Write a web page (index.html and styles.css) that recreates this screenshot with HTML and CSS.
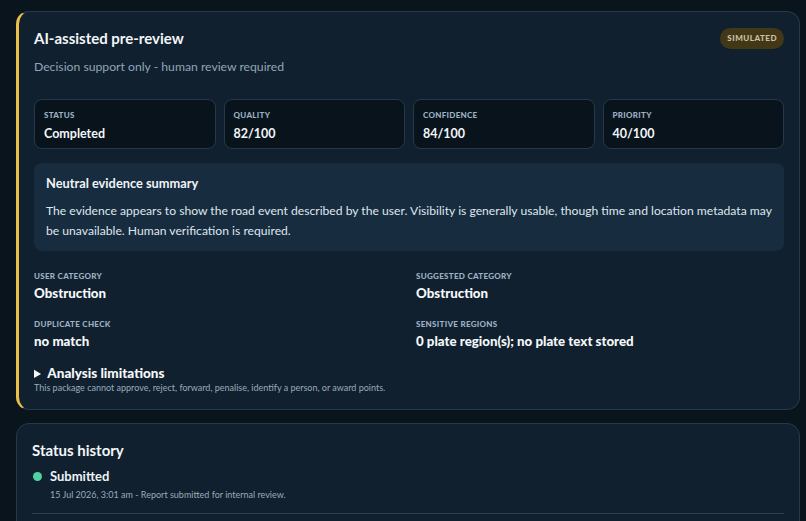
FILE: index.html
```html
<!DOCTYPE html>
<html lang="en">
<head>
<meta charset="utf-8">
<title>AI-assisted pre-review</title>
<link rel="stylesheet" href="styles.css">
</head>
<body>
<main class="page">
  <section class="card card-ai">
    <header class="card-head">
      <div>
        <h2 class="card-title">AI-assisted pre-review</h2>
        <p class="subtitle">Decision support only - human review required</p>
      </div>
      <span class="badge">SIMULATED</span>
    </header>

    <div class="stats">
      <div class="stat"><div class="label">STATUS</div><div class="stat-value">Completed</div></div>
      <div class="stat"><div class="label">QUALITY</div><div class="stat-value">82/100</div></div>
      <div class="stat"><div class="label">CONFIDENCE</div><div class="stat-value">84/100</div></div>
      <div class="stat"><div class="label">PRIORITY</div><div class="stat-value">40/100</div></div>
    </div>

    <div class="summary">
      <h3 class="summary-title">Neutral evidence summary</h3>
      <p class="summary-text">The evidence appears to show the road event described by the user. Visibility is generally usable, though time and location metadata may be unavailable. Human verification is required.</p>
    </div>

    <div class="fields">
      <div class="field"><div class="label">USER CATEGORY</div><div class="field-value">Obstruction</div></div>
      <div class="field"><div class="label">SUGGESTED CATEGORY</div><div class="field-value">Obstruction</div></div>
      <div class="field"><div class="label">DUPLICATE CHECK</div><div class="field-value">no match</div></div>
      <div class="field"><div class="label">SENSITIVE REGIONS</div><div class="field-value">0 plate region(s); no plate text stored</div></div>
    </div>

    <details class="limits">
      <summary class="limits-summary">Analysis limitations</summary>
    </details>
    <p class="limits-note">This package cannot approve, reject, forward, penalise, identify a person, or award points.</p>
  </section>

  <section class="card card-history">
    <h2 class="history-title">Status history</h2>
    <ul class="timeline">
      <li class="event">
        <span class="dot"></span>
        <div>
          <div class="event-title">Submitted</div>
          <div class="event-meta">15 Jul 2026, 3:01 am - Report submitted for internal review.</div>
        </div>
      </li>
    </ul>
  </section>
</main>
</body>
</html>
```

FILE: styles.css
```css
* { box-sizing: border-box; }
html, body {
  margin: 0;
  background: #09141d;
  height: 100%;
  overflow: hidden;
}
body {
  font-family: Lato, "Noto Sans", sans-serif;
  color: #e8eef3;
}
.page {
  padding: 11px 6px 0 16px;
  display: flex;
  flex-direction: column;
  gap: 13px;
}
.card {
  background: #10202f;
  border: 1px solid #233a4d;
  border-radius: 13px;
}
.card-ai {
  border-left: 3px solid #e9bf4a;
  padding: 15px 15px 15px 15px;
}
.card-head {
  display: flex;
  justify-content: space-between;
  align-items: flex-start;
}
.card-title {
  margin: 0;
  font-size: 15px;
  font-weight: 700;
  line-height: 22px;
  color: #f3f6f8;
}
.subtitle {
  margin: 8px 0 0;
  font-size: 12.2px;
  line-height: 20px;
  color: #93a5b5;
}
.badge {
  margin-top: 1px;
  background: #433816;
  color: #c9c2a6;
  font-size: 8px;
  font-weight: 900;
  letter-spacing: 0.5px;
  padding: 5px 7px;
  border-radius: 11px;
  line-height: 11px;
}
.stats {
  margin-top: 22px;
  display: grid;
  grid-template-columns: repeat(4, 1fr);
  gap: 8px;
}
.stat {
  background: #08131c;
  border: 1px solid #24394b;
  border-radius: 8px;
  padding: 9px 9px 8px;
  height: 50px;
}
.label {
  font-size: 8px;
  font-weight: 900;
  letter-spacing: 0.3px;
  color: #9eb0c2;
  line-height: 12px;
}
.stat-value {
  margin-top: 4px;
  font-size: 12.5px;
  font-weight: 700;
  color: #f3f6f8;
  line-height: 17px;
}
.summary {
  margin-top: 14px;
  background: #172c3f;
  border-radius: 8px;
  padding: 12px 8px 10px 12px;
}
.summary-title {
  margin: 0;
  font-size: 12.8px;
  font-weight: 700;
  color: #f0f4f7;
  line-height: 17px;
}
.summary-text {
  margin: 9px 0 0;
  font-size: 12.15px;
  line-height: 20px;
  color: #dfe7ee;
}
.fields {
  margin-top: 19px;
  display: grid;
  grid-template-columns: 1fr 1fr;
  column-gap: 14px;
  row-gap: 16px;
}
.field-value {
  margin-top: 3px;
  font-size: 13.3px;
  font-weight: 900;
  color: #f6f8fa;
  line-height: 17px;
}
.limits {
  margin-top: 14px;
}
.limits-summary {
  font-size: 13.5px;
  font-weight: 900;
  color: #f6f8fa;
  line-height: 18px;
  cursor: pointer;
}
.limits-summary::marker { font-size: 12.5px; }
.limits-note {
  margin: -2px 0 0;
  font-size: 9px;
  color: #9aabba;
  line-height: 13px;
}
.card-history {
  padding: 15px 15px 0;
  height: 120px;
}
.history-title {
  margin: 0;
  font-size: 15px;
  font-weight: 700;
  color: #f3f6f8;
  line-height: 22px;
}
.timeline {
  list-style: none;
  margin: 7px 0 0;
  padding: 0 0 12px;
  border-bottom: 1px solid #2a4154;
}
.event {
  display: flex;
  gap: 8px;
  align-items: flex-start;
}
.dot {
  width: 9px;
  height: 9px;
  border-radius: 50%;
  background: #4fd1a0;
  margin: 4px 0 0 1px;
  flex: none;
}
.event-title {
  font-size: 13px;
  font-weight: 700;
  color: #eef3f6;
  line-height: 17px;
}
.event-meta {
  margin-top: 3px;
  font-size: 9px;
  color: #9aabba;
  line-height: 13px;
}
```
